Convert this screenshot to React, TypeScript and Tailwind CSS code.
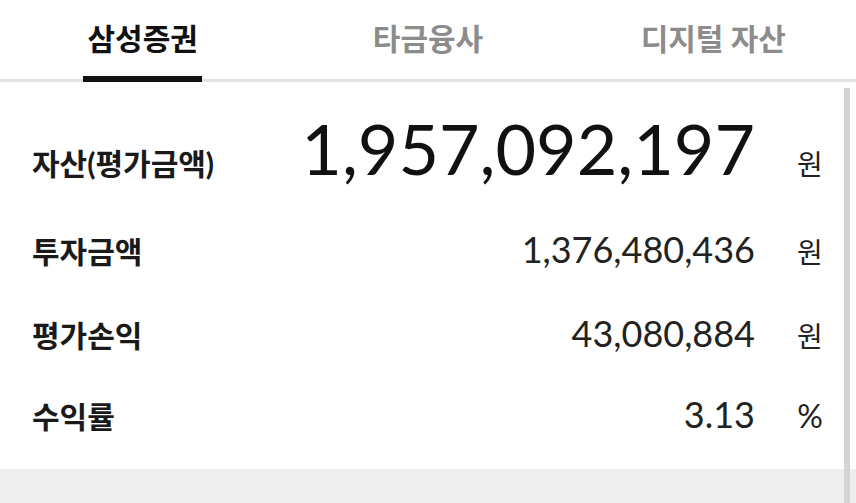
import React from "react";

const tabs = ["삼성증권", "타금융사", "디지털 자산"];

interface Row {
    label: string;
    value: string;
    unit: string;
    gap: string;
}

const rows: Row[] = [
    { label: "투자금액", value: "1,376,480,436", unit: "원", gap: "mt-[48px]" },
    { label: "평가손익", value: "43,080,884", unit: "원", gap: "mt-[48px]" },
    { label: "수익률", value: "3.13", unit: "%", gap: "mt-[45px]" },
];

export default function App() {
    const active = 0;

    return (
        <div className="relative flex h-[503px] w-full flex-col overflow-hidden bg-white font-['Lato','Noto_Sans_CJK_KR',sans-serif] text-[#1a1a1a]">
            {/* 탭 */}
            <div className="flex h-[82px] border-b-[3px] border-[#e2e2e2]">
                {tabs.map((tab, index) => (
                    <div key={tab} className="flex flex-1 justify-center">
                        <span
                            className={
                                index === active
                                    ? "-mb-[3px] h-[82px] border-b-[6px] border-[#111] px-[4px] pt-[21px] text-[30px] font-bold leading-[34px] text-[#111]"
                                    : "h-[79px] px-[4px] pt-[21px] text-[30px] font-bold leading-[34px] text-[#8c8c8c]"
                            }
                        >
                            {tab}
                        </span>
                    </div>
                ))}
            </div>

            {/* 자산 요약 */}
            <div className="pl-[32px] pr-[25px]">
                <div className="mt-[31px] flex items-baseline">
                    <div className="flex-1 text-[30px] font-bold leading-none">자산(평가금액)</div>
                    <div className="text-right text-[70px] leading-none text-[#111]">1,957,092,197</div>
                    <div className="ml-[34px] w-[42px] text-center text-[28px] leading-none text-[#222]">원</div>
                </div>
                {rows.map((row) => (
                    <div key={row.label} className={`${row.gap} flex items-baseline`}>
                        <div className="flex-1 text-[30px] font-bold leading-none">{row.label}</div>
                        <div className="text-right text-[36px] leading-none text-[#222]">{row.value}</div>
                        <div
                            className={
                                row.unit === "%"
                                    ? "ml-[34px] w-[42px] text-center text-[32px] leading-none text-[#222]"
                                    : "ml-[34px] w-[42px] text-center text-[28px] leading-none text-[#222]"
                            }
                        >
                            {row.unit}
                        </div>
                    </div>
                ))}
            </div>

            <div className="mt-auto h-[34px] bg-[#eeeeee]" />

            {/* 스크롤 표시 */}
            <div className="absolute bottom-0 right-[6px] top-[88px] w-[6px] bg-[#d4d4d4]" />
        </div>
    );
}
